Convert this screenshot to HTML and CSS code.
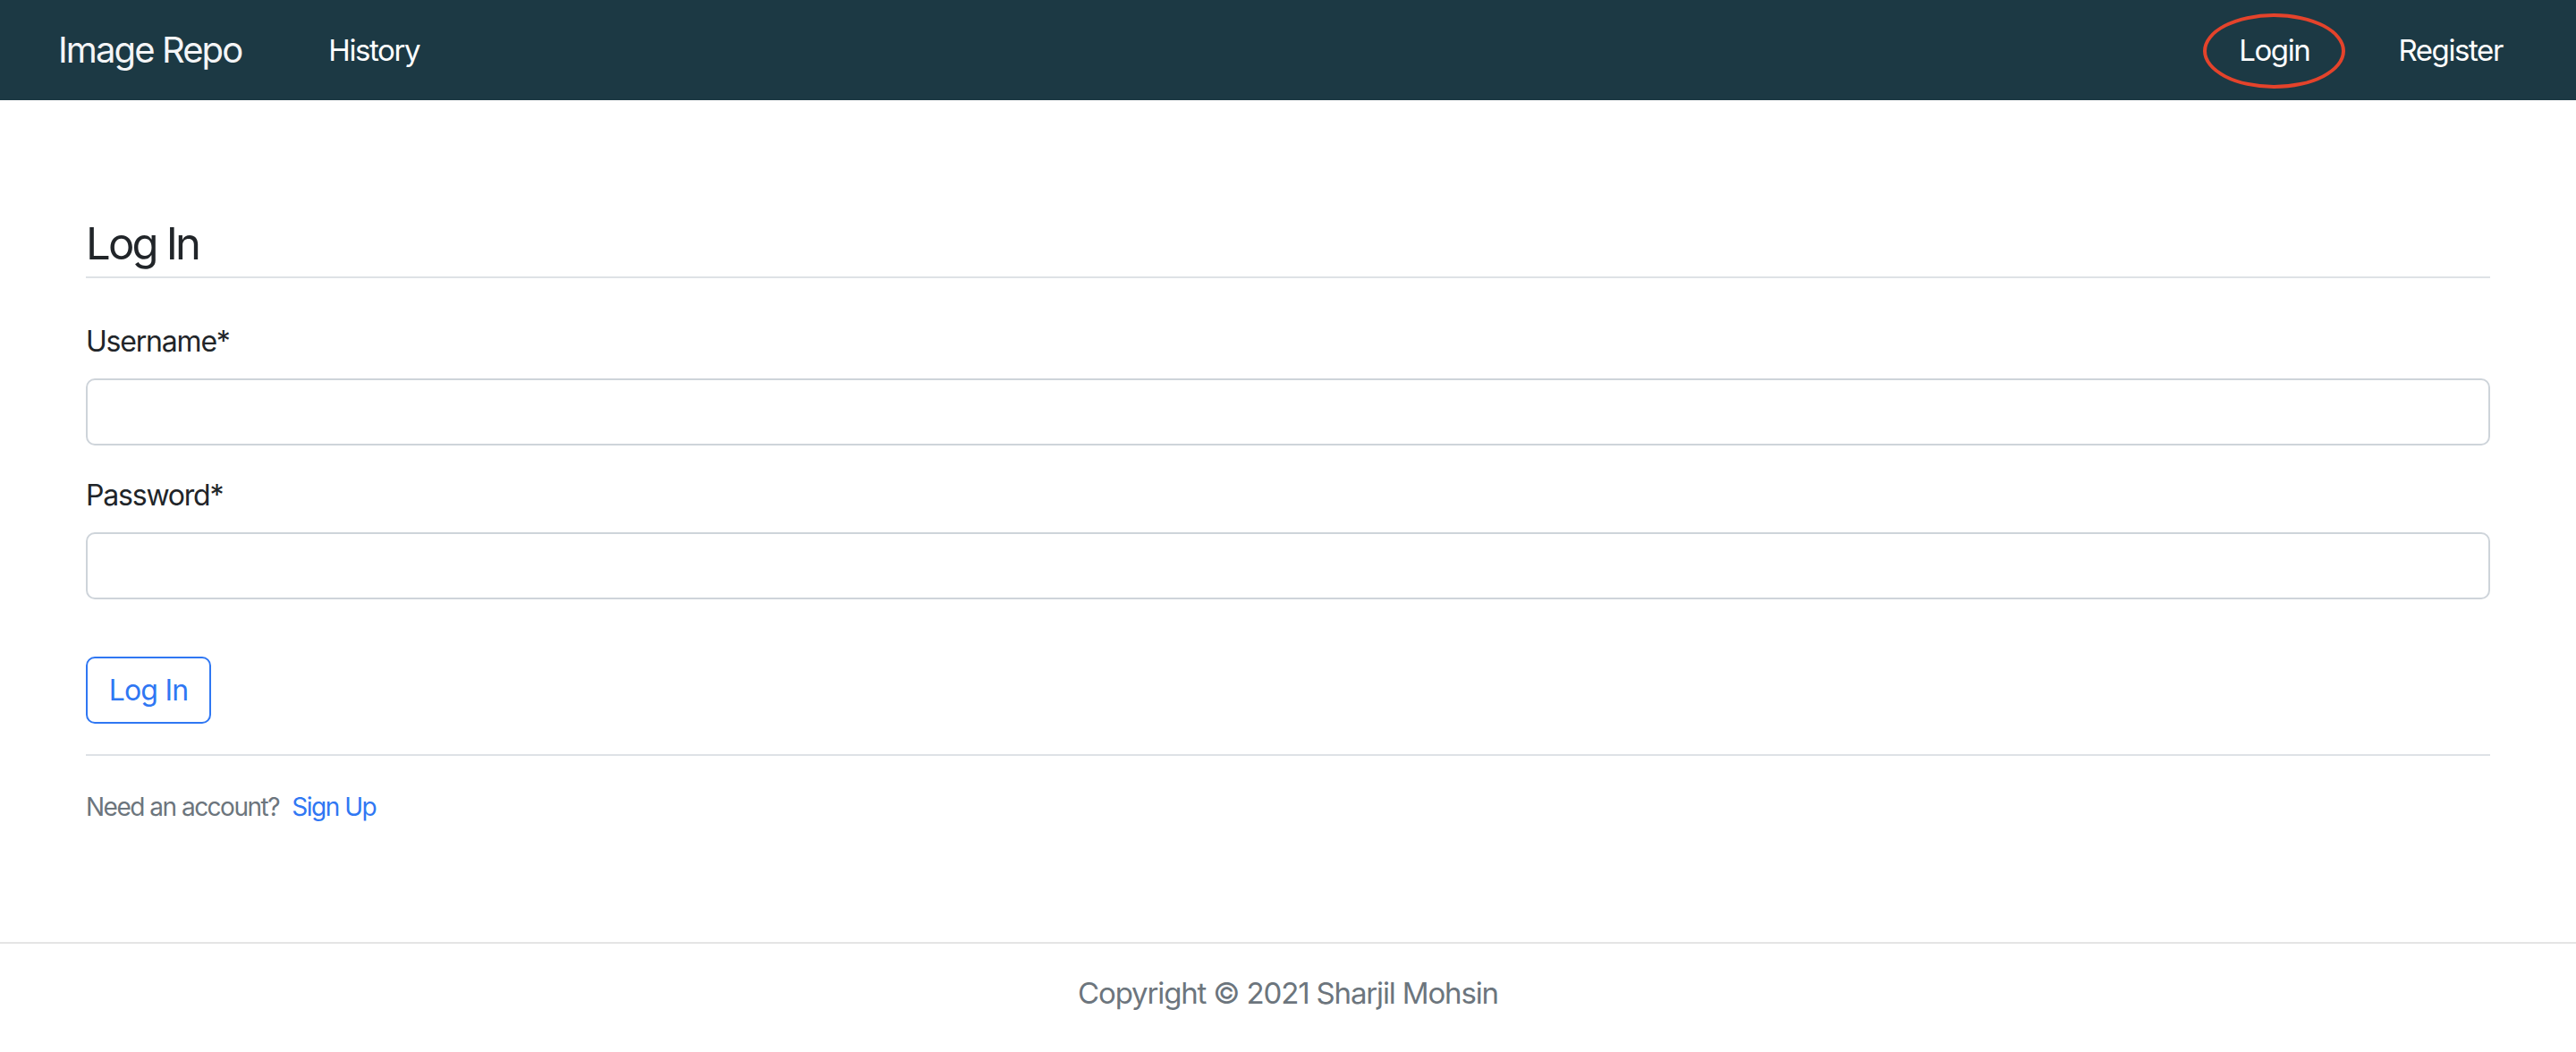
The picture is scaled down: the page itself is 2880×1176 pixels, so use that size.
FILE: index.html
```html
<!DOCTYPE html>
<html lang="en">
<head>
<meta charset="utf-8">
<title>Image Repo - Log In</title>
<link rel="stylesheet" href="styles.css">
</head>
<body>
<nav class="navbar">
  <div class="nav-left">
    <a class="brand" href="#">Image Repo</a>
    <a class="nav-link" href="#">History</a>
  </div>
  <div class="nav-right">
    <a class="nav-link circled" href="#">Login</a>
    <a class="nav-link" href="#">Register</a>
  </div>
</nav>
<main class="content">
  <h1 class="page-title">Log In</h1>
  <form class="login-form">
    <label class="field-label" for="username">Username*</label>
    <input class="field-input" id="username" type="text">
    <label class="field-label" for="password">Password*</label>
    <input class="field-input" id="password" type="password">
    <button class="btn-outline" type="button">Log In</button>
  </form>
  <div class="divider"></div>
  <p class="account-note">Need an account? <a class="signup" href="#">Sign Up</a></p>
</main>
<footer class="footer">Copyright © 2021 Sharjil Mohsin</footer>
</body>
</html>
```
FILE: styles.css
```css
* { box-sizing: border-box; }
html, body { margin: 0; padding: 0; background: #ffffff; }
body {
  font-family: Inter, "Noto Sans", "Liberation Sans", sans-serif;
  color: #212529;
  width: 2880px;
}
a { text-decoration: none; }

.navbar {
  height: 112px;
  background: #1c3944;
  display: flex;
  align-items: center;
  justify-content: space-between;
  padding: 0 82px 0 65px;
}
.nav-left, .nav-right {
  display: flex;
  align-items: center;
}
.nav-right { gap: 99px; }
.brand {
  color: #f4f5f7;
  font-size: 40px;
  line-height: 60px;
  letter-spacing: -1.9px;
  margin-right: 97px;
}
.nav-link {
  color: #ffffff;
  font-size: 33px;
  line-height: 48px;
  letter-spacing: -1.4px;
}
.circled { position: relative; }
.circled::after {
  content: "";
  position: absolute;
  left: -40px;
  right: -40px;
  top: -17px;
  bottom: -19px;
  border: 4px solid #e4432b;
  border-radius: 50%;
}

.content {
  padding: 131px 96px 0 96px;
}
.page-title {
  margin: 0;
  font-size: 49px;
  line-height: 60px;
  font-weight: 400;
  letter-spacing: -2.8px;
  padding-bottom: 6px;
  border-bottom: 2px solid #dee2e6;
}
.login-form {
  display: flex;
  flex-direction: column;
  align-items: flex-start;
  padding-top: 47px;
}
.field-label {
  font-size: 32px;
  line-height: 48px;
  letter-spacing: -1.2px;
  margin-bottom: 17px;
}
.field-input {
  width: 100%;
  height: 75px;
  border: 2px solid #ced4da;
  border-radius: 10px;
  margin: 0 0 32px 0;
  background: #ffffff;
  font: inherit;
}
#password { margin-bottom: 64px; }
.btn-outline {
  height: 75px;
  width: 140px;
  border: 2px solid #2f77f3;
  border-radius: 10px;
  background: #ffffff;
  color: #2f77f3;
  font-family: inherit;
  font-size: 32px;
  line-height: 48px;
  letter-spacing: -0.8px;
  padding: 0;
  display: flex;
  align-items: center;
  justify-content: center;
}
.divider {
  margin-top: 34px;
  height: 2px;
  background: #dee2e6;
}
.account-note {
  margin: 36px 0 0 0;
  font-size: 28px;
  line-height: 42px;
  color: #6c757d;
  letter-spacing: -1.5px;
}
.signup {
  color: #2f77f3;
  margin-left: 8px;
}
.footer {
  margin-top: 130px;
  border-top: 2px solid #e5e5e5;
  padding-top: 31px;
  text-align: center;
  font-size: 33px;
  line-height: 48px;
  color: #6c757d;
  letter-spacing: -1.15px;
}
```
